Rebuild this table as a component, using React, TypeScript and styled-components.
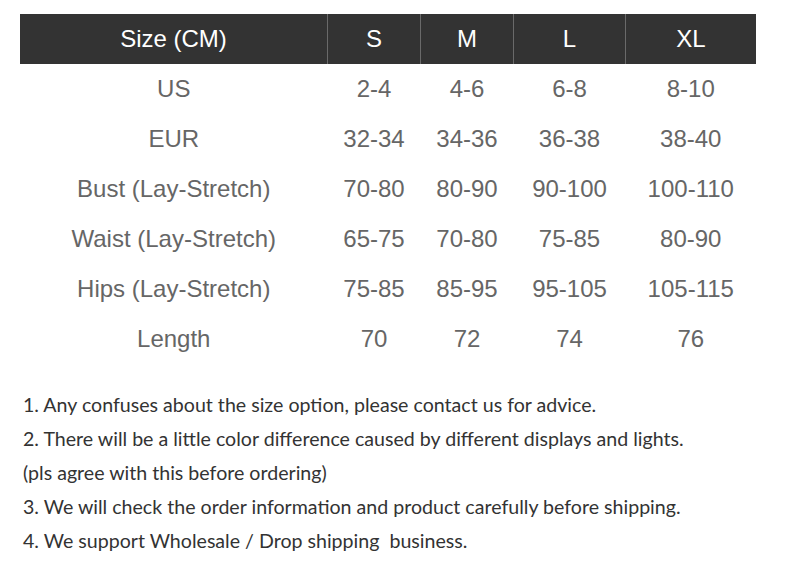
import styled, { createGlobalStyle } from 'styled-components';

const GlobalStyle = createGlobalStyle`
  body {
    margin: 0;
    background: #ffffff;
  }
`;

const Page = styled.div`
  width: 790px;
  padding: 14px 0 0 20px;
  box-sizing: border-box;
`;

const SizeTable = styled.table`
  border-collapse: collapse;
  table-layout: fixed;
  font-family: 'Liberation Sans', Arial, sans-serif;
  font-size: 24px;
`;

const HeadCell = styled.th<{ $w: number }>`
  width: ${(p) => p.$w}px;
  height: 50px;
  padding: 0;
  background: #333333;
  color: #ffffff;
  font-weight: 400;
  text-align: center;
  border-left: 1px solid #6a6a6a;

  &:first-child {
    border-left: none;
  }
`;

const Cell = styled.td`
  height: 50px;
  padding: 0;
  color: #666666;
  text-align: center;
`;

const Notes = styled.div`
  margin-top: 24px;
  padding-left: 3px;
  font-family: Lato, 'Noto Sans', sans-serif;
  font-size: 19.6px;
  line-height: 34px;
  color: #333333;
`;

const columns = [
  { label: 'Size (CM)', w: 307 },
  { label: 'S', w: 92 },
  { label: 'M', w: 92 },
  { label: 'L', w: 111 },
  { label: 'XL', w: 130 },
];

const rows = [
  ['US', '2-4', '4-6', '6-8', '8-10'],
  ['EUR', '32-34', '34-36', '36-38', '38-40'],
  ['Bust (Lay-Stretch)', '70-80', '80-90', '90-100', '100-110'],
  ['Waist (Lay-Stretch)', '65-75', '70-80', '75-85', '80-90'],
  ['Hips (Lay-Stretch)', '75-85', '85-95', '95-105', '105-115'],
  ['Length', '70', '72', '74', '76'],
];

const notes = [
  '1. Any confuses about the size option, please contact us for advice.',
  '2. There will be a little color difference caused by different displays and lights.',
  '(pls agree with this before ordering)',
  '3. We will check the order information and product carefully before shipping.',
  '4. We support Wholesale / Drop shipping\u00a0 business.',
];

export default function App() {
  return (
    <Page>
      <GlobalStyle />
      <SizeTable>
        <thead>
          <tr>
            {columns.map((c) => (
              <HeadCell key={c.label} $w={c.w}>
                {c.label}
              </HeadCell>
            ))}
          </tr>
        </thead>
        <tbody>
          {rows.map((r) => (
            <tr key={r[0]}>
              {r.map((v, i) => (
                <Cell key={i}>{v}</Cell>
              ))}
            </tr>
          ))}
        </tbody>
      </SizeTable>
      <Notes>
        {notes.map((n) => (
          <div key={n}>{n}</div>
        ))}
      </Notes>
    </Page>
  );
}
